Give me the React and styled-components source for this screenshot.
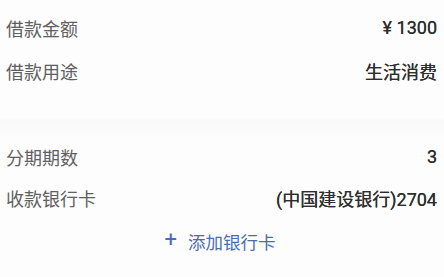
import styled, { createGlobalStyle } from "styled-components";

const GlobalStyle = createGlobalStyle`
  html, body {
    margin: 0;
    padding: 0;
    background: #fdfdfd;
  }
  body {
    font-family: Roboto, "Noto Sans CJK SC", sans-serif;
  }
`;

const Page = styled.div`
  width: 444px;
  height: 277px;
  overflow: hidden;
  display: flex;
  flex-direction: column;
  background: #fdfdfd;
`;

const Section = styled.div`
  display: flex;
  flex-direction: column;
  padding: ${(p) => p.$pad || "0"};
  background: #fdfdfd;
`;

const Gap = styled.div`
  height: 42px;
  background: linear-gradient(#fdfdfd 0, #fdfdfd 24px, #f9f9f9 27px, #fcfcfc 42px);
`;

const Row = styled.div`
  display: flex;
  align-items: center;
  justify-content: space-between;
  height: ${(p) => p.$h || 43}px;
  padding: 0 7px 0 6px;
  font-size: 18px;
`;

const Label = styled.span`
  color: #606060;
`;

const Value = styled.span`
  color: #2e2e2e;
  font-weight: 400;
  text-shadow: 0 0 0.4px #2e2e2e;
`;

const AddLink = styled.div`
  display: flex;
  align-items: center;
  justify-content: center;
  gap: 11px;
  height: 46px;
  padding-right: 4px;
  color: #4a6cb3;
  font-size: 17.5px;
`;

const Plus = styled.span`
  font-size: 22px;
  font-weight: 400;
  line-height: 1;
  margin-top: -3px;
`;

export default function App() {
  return (
    <Page>
      <GlobalStyle />
      <Section $pad="6px 0 2px">
        <Row>
          <Label>借款金额</Label>
          <Value>¥ 1300</Value>
        </Row>
        <Row>
          <Label>借款用途</Label>
          <Value>生活消费</Value>
        </Row>
      </Section>
      <Gap />
      <Section>
        <Row $h={41}>
          <Label>分期期数</Label>
          <Value>3</Value>
        </Row>
        <Row $h={41}>
          <Label>收款银行卡</Label>
          <Value>(中国建设银行)2704</Value>
        </Row>
        <AddLink>
          <Plus>+</Plus>
          <span>添加银行卡</span>
        </AddLink>
      </Section>
    </Page>
  );
}
